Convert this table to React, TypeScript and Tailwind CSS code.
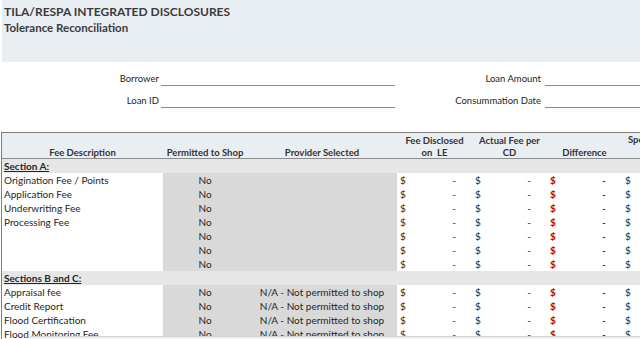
import React from 'react';

const FONT = { fontFamily: 'Lato, "Open Sans", sans-serif' };

type Row = { desc: string; provider?: string };

const sectionA: Row[] = [
  { desc: 'Origination Fee / Points' },
  { desc: 'Application Fee' },
  { desc: 'Underwriting Fee' },
  { desc: 'Processing Fee' },
  { desc: '' },
  { desc: '' },
  { desc: '' },
];

const sectionBC: Row[] = [
  { desc: 'Appraisal fee', provider: 'N/A - Not permitted to shop' },
  { desc: 'Credit Report', provider: 'N/A - Not permitted to shop' },
  { desc: 'Flood Certification', provider: 'N/A - Not permitted to shop' },
  { desc: 'Flood Monitoring Fee', provider: 'N/A - Not permitted to shop' },
];

const cols = 'grid grid-cols-[161px_84px_150px_75px_75px_75px_75px]';

function Money({ red }: { red?: boolean }) {
  return (
    <div className={`flex justify-between pl-[3px] pr-[16px] bg-white ${red ? 'text-[#c00000] font-bold' : ''}`}>
      <span>$</span>
      <span>-</span>
    </div>
  );
}

function FeeRow({ row }: { row: Row }) {
  return (
    <div className={`${cols} h-[14px] leading-[14px]`}>
      <div className="bg-white pl-[2px] whitespace-nowrap">{row.desc}</div>
      <div className="bg-[#d9d9d9] text-center">No</div>
      <div className="bg-[#d9d9d9] text-center whitespace-nowrap">{row.provider ?? ''}</div>
      <Money />
      <Money />
      <Money red />
      <Money />
    </div>
  );
}

function SectionRow({ label }: { label: string }) {
  return (
    <div className="h-[14px] leading-[14px] bg-[#e7e6e6] pl-[2px] font-bold underline">{label}</div>
  );
}

export default function App() {
  return (
    <div className="w-[640px] h-[339px] overflow-hidden bg-white relative text-[#262626]" style={FONT}>
      {/* 标题区 */}
      <div className="ml-[2px] h-[62px] bg-[#e9eef3] pl-[2px] pt-[4px]">
        <div className="text-[12px] font-bold leading-[15px] text-[#3b3b3b]">TILA/RESPA INTEGRATED DISCLOSURES</div>
        <div className="text-[11.5px] font-bold leading-[14px] mt-[2px] text-[#3b3b3b]">Tolerance Reconciliation</div>
      </div>

      {/* 贷款信息 */}
      <div className="h-[70px] pt-[10px] text-[9.5px] flex flex-col gap-[8px]">
        <div className="flex items-end h-[14px]">
          <div className="w-[161px] text-right pr-[2px]">Borrower</div>
          <div className="w-[234px] border-b border-[#8c8c8c] h-[12px]" />
          <div className="w-[150px] text-right pr-[4px]">Loan Amount</div>
          <div className="w-[95px] border-b border-[#8c8c8c] h-[12px]" />
        </div>
        <div className="flex items-end h-[14px]">
          <div className="w-[161px] text-right pr-[2px]">Loan ID</div>
          <div className="w-[234px] border-b border-[#8c8c8c] h-[12px]" />
          <div className="w-[150px] text-right pr-[4px]">Consummation Date</div>
          <div className="w-[95px] border-b border-[#8c8c8c] h-[12px]" />
        </div>
      </div>

      {/* 表格 */}
      <div className="ml-[1px] w-[800px] border-t border-l border-[#7f7f7f] text-[10px]">
        <div className={`${cols} h-[26px] bg-[#e9eef3] border-b border-[#8c8c8c] font-bold text-[9.5px] leading-[12px] text-[#333]`}>
          <div className="flex items-end justify-center">Fee Description</div>
          <div className="flex items-end justify-center">Permitted to Shop</div>
          <div className="flex items-end justify-center">Provider Selected</div>
          <div className="flex flex-col items-center justify-center pt-[2px]">
            <span>Fee Disclosed</span>
            <span>on&nbsp; LE</span>
          </div>
          <div className="flex flex-col items-center justify-center pt-[2px]">
            <span>Actual Fee per</span>
            <span>CD</span>
          </div>
          <div className="flex items-end justify-center">Difference</div>
          <div className="flex items-start pl-[6px] pt-[1px]">Specific</div>
        </div>
        <SectionRow label="Section A:" />
        {sectionA.map((r, i) => (
          <FeeRow key={i} row={r} />
        ))}
        <SectionRow label="Sections B and C:" />
        {sectionBC.map((r, i) => (
          <FeeRow key={i} row={r} />
        ))}
      </div>

      {/* 底部滚动条残影 */}
      <div className="absolute left-[30px] right-0 bottom-0 h-[3px] bg-[#f0f0f0] border-t border-[#d4d4d4]" />
    </div>
  );
}
